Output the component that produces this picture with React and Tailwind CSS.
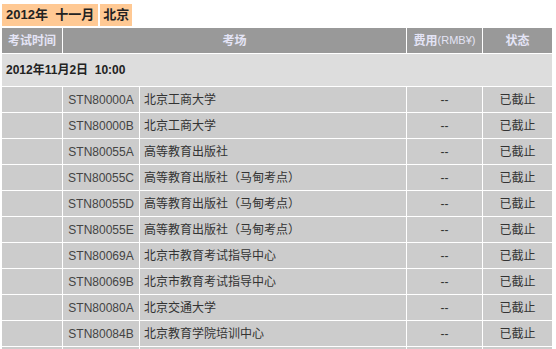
import React from "react";

const rows = [
  ["STN80000A", "北京工商大学"],
  ["STN80000B", "北京工商大学"],
  ["STN80055A", "高等教育出版社"],
  ["STN80055C", "高等教育出版社（马甸考点）"],
  ["STN80055D", "高等教育出版社（马甸考点）"],
  ["STN80055E", "高等教育出版社（马甸考点）"],
  ["STN80069A", "北京市教育考试指导中心"],
  ["STN80069B", "北京市教育考试指导中心"],
  ["STN80080A", "北京交通大学"],
  ["STN80084B", "北京教育学院培训中心"],
];

export default function App() {
  return (
    <div
      className="w-[556px] h-[349px] overflow-hidden bg-white text-[12px] text-[#333]"
      style={{ fontFamily: "'Liberation Sans', 'Noto Sans CJK SC', sans-serif" }}
    >
      <div className="flex gap-[2px] pl-[2px] pt-[4px]">
        <div className="h-[22px] bg-[#ffc994] px-[4px] flex items-center font-bold text-[13px] text-[#222]">
          2012年&nbsp;&nbsp;十一月
        </div>
        <div className="h-[22px] bg-[#ffc994] px-[3px] flex items-center font-bold text-[13px] text-[#222]">
          北京
        </div>
      </div>
      <div className="mt-[2px] ml-[2px] grid grid-cols-[60px_76px_266px_75px_69px] grid-rows-[25px_32px_repeat(11,25px)] gap-[1px]">
        <div className="bg-[#999999] flex items-center justify-center font-bold text-[#e4e4f6]">考试时间</div>
        <div className="col-span-2 bg-[#999999] flex items-center justify-center font-bold text-[#e4e4f6]">考场</div>
        <div className="bg-[#999999] flex items-center justify-center text-[#e4e4f6]">
          <span className="font-bold">费用</span>
          <span className="text-[11px]">(RMB¥)</span>
        </div>
        <div className="bg-[#999999] flex items-center justify-center font-bold text-[#e4e4f6]">状态</div>
        <div className="col-span-5 bg-[#dddddd] flex items-center pl-[4px] font-bold text-[#222]">
          2012年11月2日&nbsp;&nbsp;10:00
        </div>
        {rows.map(([code, name], i) => (
          <React.Fragment key={i}>
            <div className="bg-[#cccccc]"></div>
            <div className="bg-[#cccccc] flex items-center justify-center text-[#444]">{code}</div>
            <div className="bg-[#cccccc] flex items-center pl-[4px]">{name}</div>
            <div className="bg-[#cccccc] flex items-center justify-center">--</div>
            <div className="bg-[#cccccc] flex items-center justify-center">已截止</div>
          </React.Fragment>
        ))}
        <div className="bg-[#cccccc]"></div>
        <div className="bg-[#cccccc]"></div>
        <div className="bg-[#cccccc]"></div>
        <div className="bg-[#cccccc]"></div>
        <div className="bg-[#cccccc]"></div>
      </div>
    </div>
  );
}
